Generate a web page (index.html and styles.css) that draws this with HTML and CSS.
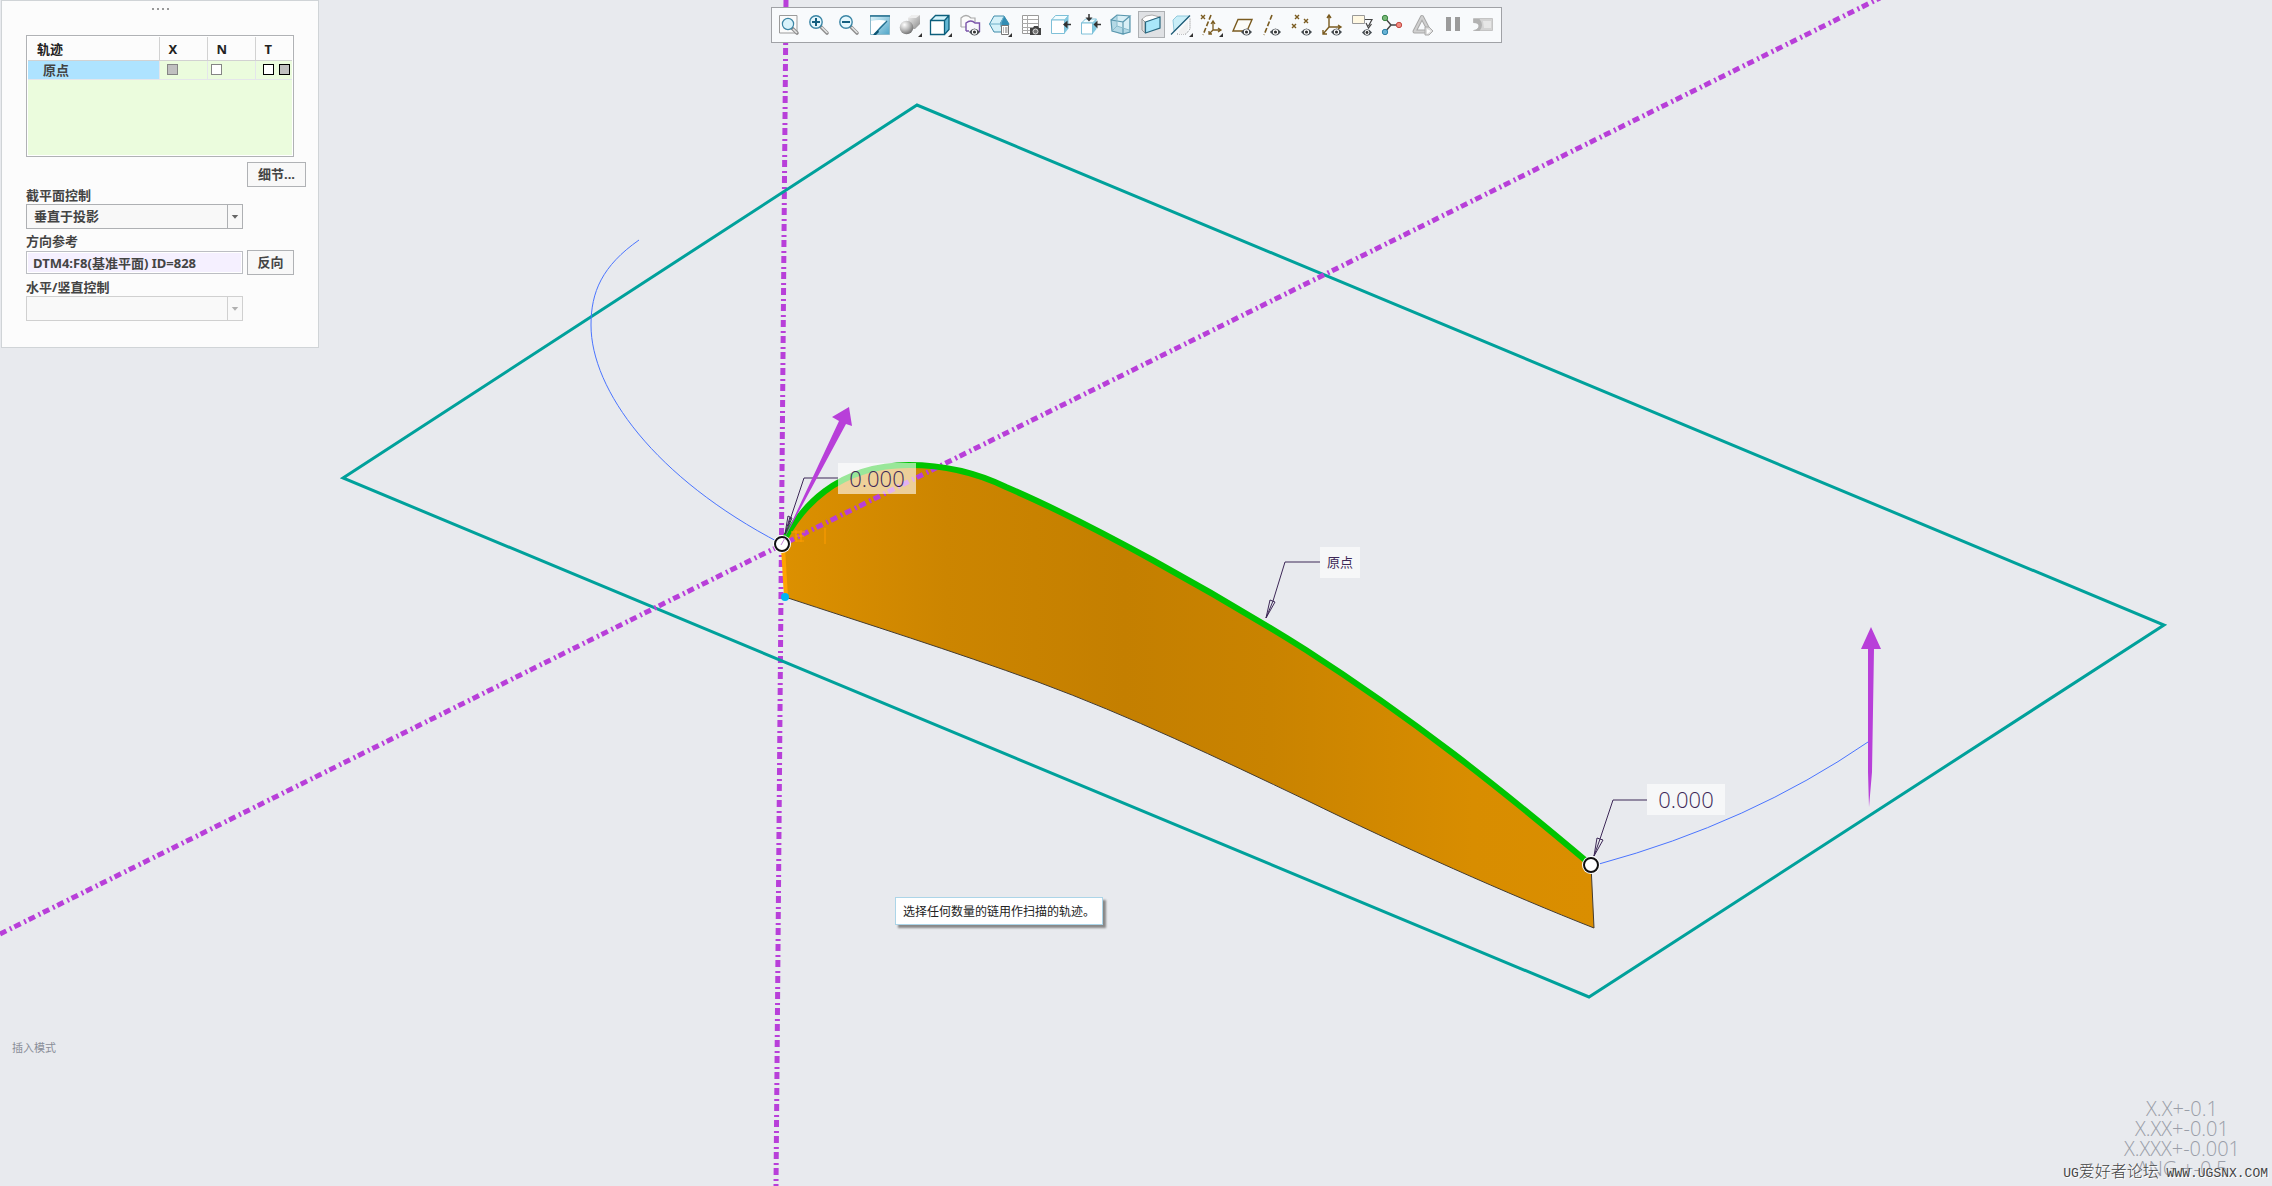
FILE: index.html
```html
<!DOCTYPE html>
<html lang="zh-CN">

<head>
  <meta charset="utf-8" />
  <title>扫描</title>
  <link rel="stylesheet" href="styles.css">
</head>

<body>
  <main class="workspace">

    <!-- 图形区 -->
    <svg class="scene" viewBox="0 0 2272 1186" preserveAspectRatio="xMidYMid slice">
      <defs>
        <linearGradient id="surface" x1="0" y1="0" x2="1" y2="0">
          <stop offset="0" stop-color="#dc9000" />
          <stop offset="0.2" stop-color="#cc8500" />
          <stop offset="0.42" stop-color="#c47f00" />
          <stop offset="0.6" stop-color="#c98300" />
          <stop offset="0.85" stop-color="#d88d00" />
          <stop offset="1" stop-color="#da8e00" />
        </linearGradient>
      </defs>

      <path class="axis" d="M786 0L776 1186" />
      <polygon class="plane" points="343,478 917,105 2164,625 1589,997" />

      <path fill="url(#surface)" d="M784 544C800 510 835 465 909 465C945 465 975 472 1006 487C1090 523 1210 590 1306 650C1413 719 1500 788 1591 865L1594 928C1510 895 1400 846 1306 800C1220 759 1130 716 1038 682C950 650 870 625 785 597Z" />
      <path class="edge" d="M1591 865L1594 928C1510 895 1400 846 1306 800C1220 759 1130 716 1038 682C950 650 870 625 785 597" />
      <path class="axis" d="M0 934L1880 -2" />
      <path class="origin" d="M784 540C800 510 835 465 909 465C945 465 975 472 1006 487C1090 523 1210 590 1306 650C1413 719 1500 788 1591 865" />
      <path class="side" d="M783 548L786 597" />
      <circle cx="785" cy="597" r="4" fill="#00b4f0" />
      <path class="mark" d="M791 532h14M796 530v12M801 530v12M796 536h8M796 541h8M825 528v16" />

      <path class="curve" d="M639 240C602 266 591 292 591 325C591 390 655 478 780 543" />
      <path class="curve" d="M1599 864Q1750 823 1868 742" />

      <path class="leader" d="M838 478H804L788 526M788 516L792 518L785 534ZM785 534L790 517" />
      <path class="leader" d="M1647 800H1613L1600 839M1597 838L1603 840L1594 856ZM1594 856L1600 839" />
      <path class="leader" d="M1320 562H1285L1273 601M1270 600L1275 602L1266 618ZM1266 618L1273 601" />

      <polygon class="arrow" points="849,407 832,417 839,421 783,541 846,424 852,426" />
      <polygon class="arrow" points="1871,627 1861,649 1868,649 1868,772 1869,807 1872,772 1874,649 1881,649" />

      <circle class="halo" cx="782" cy="544" r="9" />
      <circle class="handle" cx="782" cy="544" r="7" />
      <circle class="halo" cx="1591" cy="865" r="9" />
      <circle class="handle" cx="1591" cy="865" r="7" />
      <path class="tail" d="M781 545L785 538" />

      <rect class="tag" x="838" y="463" width="78" height="31" />
      <text class="dim" x="877" y="487">0.000</text>
      <rect class="tag" x="1647" y="784" width="78" height="31" />
      <text class="dim" x="1686" y="808">0.000</text>
      <rect class="tag" x="1320" y="547" width="40" height="31" />
      <text class="name" x="1340" y="567">原点</text>
    </svg>

    <!-- 参考面板 -->
    <aside class="panel">
      <div class="grip"><i></i><i></i><i></i><i></i></div>
      <div class="list">
        <table>
          <thead>
            <tr><th class="track">轨迹</th><th>X</th><th>N</th><th>T</th></tr>
          </thead>
          <tbody>
            <tr>
              <td class="track selected">原点</td>
              <td><input type="checkbox" class="box off" aria-label="X" disabled /></td>
              <td class="n"><input type="checkbox" class="box" aria-label="N" /></td>
              <td class="t"><input type="checkbox" class="box dark" aria-label="T1" /><input type="checkbox" class="box dark off" aria-label="T2" disabled /></td>
            </tr>
          </tbody>
        </table>
      </div>
      <div class="detail"><button type="button" class="btn wide">细节...</button></div>

      <label for="section">截平面控制</label>
      <div class="row">
        <div class="combo">
          <select id="section"><option>垂直于投影</option></select>
          <svg viewBox="0 0 15 23"><path d="M4 10h7l-3.500 4z" /></svg>
        </div>
      </div>
      <label for="direction">方向参考</label>
      <div class="row">
        <input type="text" id="direction" class="ref" value="DTM4:F8(基准平面) ID=828" />
        <button type="button" class="btn">反向</button>
      </div>
      <label for="horizontal">水平/竖直控制</label>
      <div class="row">
        <div class="combo disabled">
          <select id="horizontal" disabled><option></option></select>
          <svg viewBox="0 0 15 23"><path d="M4 10h7l-3.500 4z" /></svg>
        </div>
      </div>
    </aside>

    <!-- 共用图形 -->
    <svg class="defs" aria-hidden="true">
      <linearGradient id="blue" x1="0" y1="0" x2="1" y2="1">
        <stop offset="0" stop-color="#e4f7fc" />
        <stop offset="1" stop-color="#4fa5c8" />
      </linearGradient>
      <linearGradient id="gray" x1="0" y1="0" x2="1" y2="1">
        <stop offset="0" stop-color="#f4f4f4" />
        <stop offset="1" stop-color="#8b8b8b" />
      </linearGradient>
      <radialGradient id="ball" cx="0.35" cy="0.3" r="0.75">
        <stop offset="0" stop-color="#ffffff" />
        <stop offset="0.5" stop-color="#bdbdbd" />
        <stop offset="1" stop-color="#6d6d6d" />
      </radialGradient>
      <symbol id="more" viewBox="0 0 24 24"><path d="M24 20v4h-4z" fill="#333" /></symbol>
      <symbol id="eye" viewBox="0 0 10 7">
        <path d="M0 3.500Q5-3 10 3.500Q5 10 0 3.500Z" fill="#454b50" />
        <circle cx="5" cy="3.500" r="2.400" fill="#fff" />
        <circle cx="5" cy="3.500" r="1.400" fill="#333" />
      </symbol>
      <symbol id="lens" viewBox="0 0 24 24">
        <path d="M13.500 13.500L20 20" stroke="#8c8c8c" stroke-width="3.600" stroke-linecap="round" />
        <path d="M15 14.500L20 19.500" stroke="#e4e4e4" stroke-width="1.600" stroke-linecap="round" />
        <circle cx="9" cy="9" r="6.200" fill="#e5f7fd" stroke="#3b85a5" stroke-width="1.400" />
      </symbol>
    </svg>

    <header class="top">
      <nav class="toolbar" aria-label="图形工具栏">
        <button type="button" title="重新调整"><svg viewBox="0 0 24 24">
          <path d="M2.500 2.500h17.500v17.500h-17.500z" fill="#fbfbfb" stroke="#9b9b9b" />
          <path d="M15 15l5 5" stroke="#8c8c8c" stroke-width="3.600" stroke-linecap="round" />
          <path d="M16 16l4 4" stroke="#e4e4e4" stroke-width="1.600" />
          <circle cx="11" cy="11" r="5.600" fill="#d9f3fb" stroke="#3b85a5" stroke-width="1.200" />
        </svg></button>
        <button type="button" title="放大"><svg viewBox="0 0 24 24"><use href="#lens" /><path d="M5 9h8M9 5v8" stroke="#155f80" stroke-width="2" /></svg></button>
        <button type="button" title="缩小"><svg viewBox="0 0 24 24"><use href="#lens" /><path d="M5 9h8" stroke="#155f80" stroke-width="2" /></svg></button>
        <button type="button" title="重画"><svg viewBox="0 0 24 24">
          <path d="M2.500 2.500h19v19h-19z" fill="url(#blue)" stroke="#8cb9ca" />
          <path d="M3 8Q12 6 19 8Q11 13 7 21H3z" fill="#fff" />
          <path d="M2 3h20M6 21.500L19 8" stroke="#256f8f" stroke-width="1.300" />
          <path d="M5 22l5-5 1 2-3 3z" fill="#0d5473" />
        </svg></button>
        <button type="button" title="渲染选项"><svg viewBox="0 0 24 24">
          <path d="M10 5l4-3h8v9l-5 5h-6z" fill="url(#gray)" />
          <path d="M10 5l4-3h8l-4 3z" fill="#eee" />
          <circle cx="8.500" cy="14.500" r="6.800" fill="url(#ball)" />
          <use href="#more" />
        </svg></button>
        <button type="button" title="显示样式"><svg viewBox="0 0 24 24">
          <path d="M2.500 7.500l5-5h13.500l-4.500 5z" fill="#d4f4fc" />
          <path d="M16.500 7.500l4.500-5v14l-4.500 5z" fill="#62b7d4" />
          <path d="M2.500 7.500h14v14h-14z" fill="#fff" />
          <path d="M2.500 7.500h14v14h-14zl5-5h13.500v14l-4.500 5M16.500 7.500l4.500-5" fill="none" stroke="#0d5f7c" stroke-width="1.300" />
          <use href="#more" />
        </svg></button>
        <button type="button" title="已保存方向"><svg viewBox="0 0 24 24">
          <path d="M3 14V5q5-5 10 0h4v4M3 14h5" fill="#fbfbfb" stroke="#aaa" stroke-width="1.200" />
          <path d="M8 18V10q5-4 9 0h4.500v9M8 18h3" fill="#f8f8fc" stroke="#7a54aa" stroke-width="1.400" />
          <use href="#eye" x="11" y="15" width="11" height="8" />
        </svg></button>
        <button type="button" title="视图管理器"><svg viewBox="0 0 24 24">
          <path d="M1.500 11L6 3h10l5 8-4 8H6z" fill="#d5f1f9" stroke="#418caa" />
          <path d="M12 10l4-7 5 8-1 3h-7z" fill="#328db4" />
          <path d="M1.500 11H13M13 14v-4l3-7" fill="none" stroke="#6aaec8" />
          <path d="M13.500 12.500h7v9h-7z" fill="#fff" stroke="#777" />
          <path d="M15 15h1M17 15h2.500M15 17h1M17 17h2.500M15 19h1M17 19h2.500" stroke="#777" />
          <use href="#more" />
        </svg></button>
        <button type="button" title="图像管理"><svg viewBox="0 0 24 24">
          <path d="M4.500 2.500h16v18h-16z" fill="#fff" stroke="#999" />
          <path d="M4 6.500h16M4 10.500h16M4 14.500h16M4 17.500h12M9.500 2v18" stroke="#aaa" />
          <path d="M12 15h3l1-2h4l1 2h2v7H12z" fill="#444" />
          <circle cx="17.500" cy="18.500" r="2.500" fill="#777" stroke="#ddd" />
        </svg></button>
        <button type="button" title="右视图"><svg viewBox="0 0 24 24">
          <path d="M2.500 7l4-4.500h13l-4 4.500z" fill="#f3fdff" stroke="#7fc0d8" />
          <path d="M15.500 7l4-4.500v13l-4 5z" fill="#80c8e0" />
          <path d="M2.500 7h13v13.500h-13z" fill="#fff" stroke="#7fc0d8" />
          <path d="M16 11.500h6" stroke="#333" stroke-width="1.500" /><path d="M14 11.500l4.500-4v8z" fill="#333" />
        </svg></button>
        <button type="button" title="定向"><svg viewBox="0 0 24 24">
          <path d="M2.500 10l4-4h11l-4 4z" fill="#f3fdff" stroke="#7fc0d8" />
          <path d="M13.500 10l4-4v10l-4 5z" fill="#80c8e0" />
          <path d="M2.500 10h11v11h-11z" fill="#fff" stroke="#7fc0d8" />
          <path d="M16 11.500h6M10 1v5" stroke="#333" stroke-width="1.500" /><path d="M14.500 11.500l4-4v8zM10 8.500l-3.500-4h7z" fill="#333" />
        </svg></button>
        <button type="button" title="透视图"><svg viewBox="0 0 24 24">
          <path d="M2 7l6-5 13 1v16l-7 3-11-4z" fill="#b4d9e6" />
          <path d="M8 2v11l12 4V3z" fill="#d9eff6" />
          <path d="M2 7l12 2v12L3 18zM2 7l6-5 13 1-7 6M21 3v16l-7 2" fill="none" stroke="#5a97ae" stroke-width="1.200" />
          <path d="M8 3v10l-4 4M8 13l12 4" fill="none" stroke="#8abccd" />
        </svg></button>
        <button type="button" class="active" title="截面"><svg viewBox="0 0 24 24">
          <path d="M3 6q3-4 10-4l8 2-15 6z" fill="#fff" stroke="#aaa" />
          <path d="M3 6v11l3 3V9z" fill="#ddd" stroke="#999" />
          <path d="M6.500 9L21 4v11L6.500 20z" fill="#a9e7fa" stroke="#28677f" stroke-width="1.200" />
        </svg></button>
        <button type="button" title="基准显示过滤"><svg viewBox="0 0 24 24">
          <path d="M4 7l4-4h12L5 18z" fill="#c9eef8" stroke="#91c9dc" />
          <path d="M8 21h9l4-5V5" fill="none" stroke="#888" stroke-dasharray="1 1" />
          <path d="M10 21V18L19 8v8l-3 5z" fill="#f1f1f1" />
          <path d="M2 21.500L21 2.500" stroke="#1b5874" stroke-width="1.300" />
          <use href="#more" />
        </svg></button>
        <button type="button" title="基准显示"><svg viewBox="0 0 24 24">
          <path d="M2 2l4 4M6 2L2 6" stroke="#7a5b20" stroke-width="1.400" />
          <path d="M12 2L4 22" stroke="#7a5b20" stroke-width="1.600" stroke-dasharray="5 2" />
          <path d="M14 9v8h7M14 17l-4 4M12 11l2-3 2 3M19 15l3 2-3 2M10 18v3h3" fill="none" stroke="#7a5b20" stroke-width="1.300" />
          <use href="#more" />
        </svg></button>
        <button type="button" title="平面显示"><svg viewBox="0 0 24 24">
          <path d="M8 6.500h14L17 18H3z" fill="#fcfcf8" stroke="#7a5b20" stroke-width="1.400" />
          <use href="#eye" x="11" y="15" width="11" height="8" />
        </svg></button>
        <button type="button" title="轴显示"><svg viewBox="0 0 24 24">
          <path d="M12 2L4 22" stroke="#7a5b20" stroke-width="1.600" stroke-dasharray="5 2" />
          <use href="#eye" x="10" y="15" width="11" height="8" />
        </svg></button>
        <button type="button" title="点显示"><svg viewBox="0 0 24 24">
          <path d="M5 2l4 4M9 2L5 6M14 6l4 4M18 6l-4 4M2 11l4 4M6 11l-4 4" stroke="#7a5b20" stroke-width="1.400" />
          <use href="#eye" x="11" y="15" width="11" height="8" />
        </svg></button>
        <button type="button" title="坐标系显示"><svg viewBox="0 0 24 24">
          <path d="M9 3v11h11M9 14l-6 7M7 5l2-3 2 3M18 12l3 2-3 2M3 17v4h4" fill="none" stroke="#7a5b20" stroke-width="1.400" />
          <use href="#eye" x="11" y="15" width="11" height="8" />
        </svg></button>
        <button type="button" title="注释显示"><svg viewBox="0 0 24 24">
          <path d="M2.500 2.500h12v8h-12z" fill="#fff8e2" stroke="#999" />
          <path d="M15 6.500h7L18.500 13M16 10l2.500 5 3-4" fill="none" stroke="#444" stroke-width="1.200" />
          <use href="#eye" x="12" y="16" width="10" height="7" />
        </svg></button>
        <button type="button" title="旋转中心"><svg viewBox="0 0 24 24">
          <path d="M5 5l6 7h8M11 12l-6 7" fill="none" stroke="#444" stroke-width="1.400" />
          <circle cx="5" cy="5" r="2.700" fill="#78b878" stroke="#3b8544" />
          <circle cx="19" cy="12" r="2.700" fill="#f28a80" stroke="#c24b45" />
          <circle cx="5" cy="19" r="2.700" fill="#67b3d5" stroke="#2d7fa5" />
        </svg></button>
        <button type="button" title="仿真" disabled><svg viewBox="0 0 24 24">
          <path d="M11 4L18.500 18.500H3.500z" fill="#f8fafc" stroke="#a8a8a8" stroke-width="4" stroke-linejoin="round" />
          <path d="M11 4L18.500 18.500H3.500z" fill="none" stroke="#d0d0d0" stroke-width="2" stroke-linejoin="round" />
          <path d="M14 14h4l4 4-4 4h-4z" fill="#ddd" stroke="#aaa" />
          <path d="M16 16l4 2-4 3z" fill="#fff" />
        </svg></button>
        <button type="button" title="暂停" disabled><svg viewBox="0 0 24 24"><path d="M5 4h5v14H5zM14 4h5v14h-5z" fill="#9b9b9b" /></svg></button>
        <button type="button" title="分析" disabled><svg viewBox="0 0 24 24">
          <path d="M2.500 5.500h19v12h-19q6-1 6-5t-6-3z" fill="#d3d3d3" stroke="#c4c4c4" />
          <path d="M2.500 6h6q5 6 0 12h-6q5-2 5-5t-5-3z" fill="#b2b2b2" />
          <path d="M12 8h8v7h-7z" fill="#e6e6e6" />
        </svg></button>
      </nav>
    </header>

    <div class="tip" role="tooltip">选择任何数量的链用作扫描的轨迹。</div>

    <div class="status">插入模式</div>
    <div class="tolerance">
      <div>X.X+-0.1</div>
      <div>X.XX+-0.01</div>
      <div>X.XXX+-0.001</div>
      <div>ANG.+-0.5</div>
    </div>
    <div class="watermark"><span>UG</span>爱好者论坛<span> WWW.UGSNX.COM</span></div>
  </main>
</body>

</html>
```
FILE: styles.css
```css
* {
  box-sizing: border-box;
}

body {
  margin: 0;
  background: #e8eaee;
  color: #444;
  font: bold 13px/17px "Noto Sans", "Noto Sans CJK SC", sans-serif;
}

button,
input,
select {
  margin: 0;
  font: inherit;
  color: inherit;
}

.workspace {
  position: relative;
  min-height: 100vh;
  overflow: hidden;
}

/* 图形区 */
.scene {
  position: absolute;
  top: 0;
  left: 0;
  width: 100%;
  height: 100%;
}

.scene path {
  stroke-linejoin: round;
}

.axis,
.plane,
.edge,
.origin,
.side,
.mark,
.curve,
.leader,
.tail {
  fill: none;
}

.axis {
  stroke: #b83fd9;
  stroke-width: 5;
  stroke-dasharray: 7 4 2 3;
}

.plane {
  stroke: #00a19b;
  stroke-width: 3;
}

.edge {
  stroke: #443c30;
}

.origin {
  stroke: #00c400;
  stroke-width: 6;
}

.side {
  stroke: #ffa200;
  stroke-width: 4;
}

.mark {
  stroke: #ff9c00;
}

.curve {
  stroke: #4a74ff;
}

.leader {
  stroke: #3d2857;
}

.arrow {
  fill: #b83fd9;
}

.tail {
  stroke: #c98ad9;
}

.halo {
  fill: #fff;
}

.handle {
  fill: #fff;
  stroke: #111;
  stroke-width: 2;
}

.tag {
  fill: #fff;
  fill-opacity: 0.6;
}

.dim {
  fill: #3d2857;
  font: 300 22px "Open Sans", sans-serif;
  text-anchor: middle;
}

.name {
  fill: #3d2857;
  font: 13px "Noto Sans CJK SC", sans-serif;
  text-anchor: middle;
}

/* 参考面板 */
.panel {
  position: relative;
  width: 318px;
  margin-left: 1px;
  padding: 7px 24px 26px;
  background: #fcfcfc;
  border: 1px solid #d0d4d7;
}

.grip {
  display: flex;
  justify-content: center;
  gap: 3px;
  height: 27px;
}

.grip i {
  width: 2px;
  height: 2px;
  background: #999;
}

.list {
  width: 268px;
  height: 122px;
  padding: 1px;
  border: 1px solid #b0b2b5;
  background: #ebfcdd;
  box-shadow: inset 0 0 0 1px #fff;
}

table {
  width: 100%;
  table-layout: fixed;
  border-collapse: collapse;
}

th,
td {
  padding: 0;
  border-right: 1px solid #e4e6ea;
  border-bottom: 1px solid #e4e6ea;
}

th {
  width: 48px;
  height: 23px;
  padding: 2px 0 0 9px;
  background: #fcfcfc;
  border-color: #d2d2d2;
  color: #222;
  text-align: left;
}

th:last-child,
td:last-child {
  width: auto;
  border-right: 0;
}

th.track {
  width: 131px;
}

td {
  height: 19px;
  padding-left: 7px;
  line-height: 11px;
}

td.n {
  padding-left: 3px;
}

td.track {
  padding: 1px 0 0 15px;
  line-height: 16px;
}

.selected {
  background: #aee3ff;
}

.box {
  appearance: none;
  display: block;
  width: 11px;
  height: 11px;
  border: 1px solid #858585;
  background: #fff;
}

.off {
  background: #c0c0c0;
}

.dark {
  display: inline-block;
  border-color: #000;
  vertical-align: top;
}

.dark + .dark {
  margin-left: 5px;
}

.detail {
  display: flex;
  justify-content: flex-end;
  margin: 5px -12px 0 0;
}

.btn {
  min-width: 47px;
  height: 25px;
  padding: 0;
  border: 1px solid #b0b2b5;
  background: #f8f8f8;
}

.wide {
  min-width: 59px;
}

.panel label {
  display: block;
}

.row {
  display: flex;
  gap: 4px;
  margin-bottom: 4px;
}

.row:last-child {
  margin-bottom: 0;
}

.combo {
  position: relative;
  width: 217px;
  height: 25px;
  border: 1px solid #aeb0b3;
}

.combo select {
  appearance: none;
  width: 100%;
  height: 100%;
  padding: 0 16px 0 7px;
  border: 0;
  background: #f8f8f8;
}

.combo svg {
  position: absolute;
  top: 0;
  right: 0;
  width: 15px;
  height: 23px;
  border-left: 1px solid #aeb0b3;
  fill: #666;
  pointer-events: none;
}

.combo.disabled,
.combo.disabled svg {
  border-color: #d0d0d0;
  fill: #b0b0b0;
}

.ref {
  width: 217px;
  height: 23px;
  margin: 1px 0;
  padding: 0 6px;
  border: 1px solid #bcbec3;
  background: #f5f0ff;
  box-shadow: inset 0 0 0 1px #fff;
}

/* 工具栏 */
.defs {
  position: absolute;
  width: 0;
  height: 0;
}

.top {
  position: absolute;
  top: 7px;
  left: 0;
  right: 0;
  display: flex;
  justify-content: center;
}

.toolbar {
  display: flex;
  justify-content: space-between;
  width: 731px;
  padding: 3px 4px 4px;
  background: #f8fafc;
  border: 1px solid #a0a2a6;
}

.toolbar button {
  display: flex;
  align-items: center;
  justify-content: center;
  width: 27px;
  height: 27px;
  padding: 0;
  border: 1px solid transparent;
  background: none;
}

.toolbar .active {
  border-color: #adb0b3;
  background: #dfe1e4;
}

.toolbar svg {
  flex: none;
  width: 24px;
  height: 24px;
  fill: none;
}

/* 提示和文字 */
.tip {
  position: absolute;
  top: 897px;
  left: 895px;
  padding: 4px 7px;
  border: 1px solid #acd5e8;
  background: #fff;
  box-shadow: 3px 3px 2px #888;
  color: #222;
  font: 12px/18px "Noto Sans CJK SC", sans-serif;
}

.status {
  position: absolute;
  left: 12px;
  bottom: 131px;
  color: #8a8e98;
  font: 11px/16px "Noto Sans CJK SC", sans-serif;
}

.tolerance {
  position: absolute;
  right: 32px;
  bottom: 7px;
  color: #9a9ea8;
  font: 300 20px/20px "Open Sans", sans-serif;
  text-align: center;
}

.watermark {
  position: absolute;
  right: 4px;
  bottom: 2px;
  color: #444;
  font: 300 16px/20px "Noto Sans CJK SC", sans-serif;
  text-shadow: 1px 1px 0 #fff;
  white-space: pre;
}

.watermark span {
  font: 13px/20px "Liberation Mono", monospace;
}
```
